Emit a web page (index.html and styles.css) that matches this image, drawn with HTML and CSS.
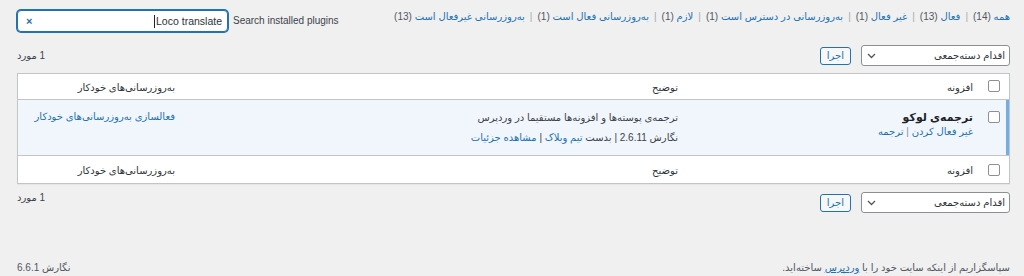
FILE: index.html
```html
<!DOCTYPE html>
<html lang="fa" dir="rtl">
<head>
<meta charset="utf-8">
<title>افزونه‌ها</title>
<link rel="stylesheet" href="styles.css">
</head>
<body>
<div class="page">
  <div class="top">
    <ul class="filters">
      <li><a href="#">همه <span class="num">(14)</span></a></li>
      <li><a href="#">فعال <span class="num">(13)</span></a></li>
      <li><a href="#">غیر فعال <span class="num">(1)</span></a></li>
      <li><a href="#">به&zwnj;روزرسانی در دسترس است <span class="num">(1)</span></a></li>
      <li><a href="#">لازم <span class="num">(1)</span></a></li>
      <li><a href="#">به&zwnj;روزرسانی فعال است <span class="num">(1)</span></a></li>
      <li><a href="#">به&zwnj;روزرسانی غیرفعال است <span class="num">(13)</span></a></li>
    </ul>
    <div class="search">
      <label class="search-label" dir="ltr">Search installed plugins</label>
      <div class="search-input">
        <span class="value" dir="ltr"><span class="caret"></span>Loco translate</span>
        <span class="clear">×</span>
      </div>
    </div>
  </div>

  <div class="tablenav">
    <div class="actions">
      <div class="select"><span>اقدام دسته&zwnj;جمعی</span><svg width="9" height="6" viewBox="0 0 9 6"><path d="M1 1l3.5 3.5L8 1" fill="none" stroke="#50575e" stroke-width="1.3"/></svg></div>
      <button class="apply">اجرا</button>
    </div>
    <div class="count">1 مورد</div>
  </div>

  <table class="plugins">
    <thead>
      <tr>
        <th class="check"><input type="checkbox"></th>
        <th class="name">افزونه</th>
        <th class="desc">توضیح</th>
        <th class="auto">به&zwnj;روزرسانی&zwnj;های خودکار</th>
      </tr>
    </thead>
    <tbody>
      <tr class="active">
        <td class="check"><input type="checkbox"></td>
        <td class="name">
          <strong class="title">ترجمه&zwnj;ی لوکو</strong>
          <div class="row-actions"><a href="#">غیر فعال کردن</a> <span class="sep">|</span> <a href="#">ترجمه</a></div>
        </td>
        <td class="desc">
          <p>ترجمه&zwnj;ی پوسته&zwnj;ها و افزونه&zwnj;ها مستقیما در وردپرس</p>
          <div class="meta">نگارش 2.6.11 <span class="bar">|</span> بدست <a href="#">تیم وبلاک</a> <span class="bar">|</span> <a href="#">مشاهده جزئیات</a></div>
        </td>
        <td class="auto"><a href="#">فعالسازی به&zwnj;روزرسانی&zwnj;های خودکار</a></td>
      </tr>
    </tbody>
    <tfoot>
      <tr>
        <th class="check"><input type="checkbox"></th>
        <th class="name">افزونه</th>
        <th class="desc">توضیح</th>
        <th class="auto">به&zwnj;روزرسانی&zwnj;های خودکار</th>
      </tr>
    </tfoot>
  </table>

  <div class="tablenav bottom">
    <div class="actions">
      <div class="select"><span>اقدام دسته&zwnj;جمعی</span><svg width="9" height="6" viewBox="0 0 9 6"><path d="M1 1l3.5 3.5L8 1" fill="none" stroke="#50575e" stroke-width="1.3"/></svg></div>
      <button class="apply">اجرا</button>
    </div>
    <div class="count">1 مورد</div>
  </div>

  <footer class="footer">
    <span class="thanks">سپاسگزاریم از اینکه سایت خود را با <a href="#">وردپرس</a> ساخته&zwnj;اید.</span>
    <span class="version">نگارش 6.6.1</span>
  </footer>
</div>
</body>
</html>
```

FILE: styles.css
```css
* { box-sizing: border-box; }
html, body { margin: 0; padding: 0; }
body {
  background: #f0f0f1;
  color: #3c434a;
  font-family: "Liberation Sans", "DejaVu Sans", sans-serif;
  font-size: 10px;
  line-height: 14px;
  direction: rtl;
}
a { color: #2271b1; text-decoration: none; }

.page {
  height: 276px;
  display: flex;
  flex-direction: column;
  padding: 0 14px 0 17px;
  overflow: hidden;
}

/* top */
.top {
  display: flex;
  justify-content: space-between;
  align-items: flex-start;
  padding-top: 10px;
  height: 32px;
}
.filters {
  display: flex;
  list-style: none;
  margin: 0;
  padding: 0;
  line-height: 14px;
  white-space: nowrap;
}
.filters li + li::before {
  content: "|";
  color: #a7aaad;
  margin: 0 5px;
}
.filters .num { color: #50575e; }

.search {
  display: flex;
  align-items: center;
  gap: 5px;
  height: 22px;
}
.search-label { color: #3c434a; font-size: 10px; }
.search-input {
  width: 211px;
  height: 22px;
  background: #fff;
  border: 1px solid #2271b1;
  box-shadow: 0 0 0 1px #2271b1;
  border-radius: 4px;
  display: flex;
  align-items: center;
  justify-content: space-between;
  padding: 0 5px 0 8px;
  font-size: 10.5px;
  color: #2c3338;
}
.caret {
  display: inline-block;
  width: 1px;
  height: 13px;
  background: #1d2327;
  vertical-align: middle;
  margin-right: 1px;
}
.clear { color: #2271b1; font-weight: bold; font-size: 11px; }

/* tablenav */
.tablenav {
  display: flex;
  justify-content: space-between;
  align-items: center;
  height: 21px;
  margin-top: 13px;
}
.tablenav.bottom { margin-top: 8px; align-items: flex-start; }
.tablenav.bottom .count { margin-top: -1px; }
.actions { display: flex; align-items: center; gap: 10px; }
.select {
  width: 149px;
  height: 21px;
  background: #fff;
  border: 1px solid #8c8f94;
  border-radius: 3px;
  display: flex;
  align-items: center;
  justify-content: space-between;
  padding: 0 4px 0 5px;
  color: #2c3338;
}
.apply {
  height: 18px;
  padding: 0 6px;
  border: 1px solid #2271b1;
  border-radius: 3px;
  background: #f6f7f7;
  color: #2271b1;
  font: inherit;
  line-height: 16px;
}
.count { color: #3c434a; }

/* table */
.plugins {
  margin-top: 7px;
  width: 100%;
  table-layout: fixed;
  border-collapse: separate;
  border-spacing: 0;
  background: #fff;
  border: 1px solid #c3c4c7;
  box-shadow: 0 1px 1px rgba(0,0,0,.04);
}
.plugins th, .plugins td {
  text-align: right;
  font-weight: normal;
  vertical-align: top;
  padding: 0 10px;
}
.plugins .check { width: 26px; padding: 0 9px 0 0; }
.plugins .name { width: 295px; }
.plugins .auto { width: 167px; }

.plugins thead th {
  padding-top: 7px;
  padding-bottom: 4px;
  height: 25px;
  border-bottom: 1px solid #c3c4c7;
  color: #2c3338;
}
.plugins thead th.check, .plugins tfoot th.check { padding-top: 6px; }
.plugins tfoot th {
  padding-top: 8px;
  padding-bottom: 5px;
  height: 28px;
  border-top: 1px solid #c3c4c7;
  color: #2c3338;
}
.plugins tfoot th.check { padding-top: 8px; }

input[type="checkbox"] {
  appearance: none;
  -webkit-appearance: none;
  width: 12px;
  height: 12px;
  margin: 0;
  border: 1px solid #8c8f94;
  border-radius: 2px;
  background: #fff;
  display: block;
}

.plugins tr.active td {
  background: #f0f6fc;
  height: 55px;
  padding-top: 10px;
}
.plugins tr.active td.check {
  border-right: 3px solid #72aee6;
  padding-right: 6px;
  padding-top: 11px;
}
.title {
  display: block;
  font-weight: bold;
  font-size: 11px;
  color: #1d2327;
}
.row-actions { margin-top: 1px; color: #a7aaad; }
.row-actions .sep { color: #8c8f94; }
.desc p { margin: 0; padding-top: 1px; color: #3c434a; }
.meta { margin-top: 6px; color: #3c434a; }
.meta .bar { color: #3c434a; }

/* footer */
.footer {
  margin-top: auto;
  display: flex;
  justify-content: space-between;
  padding-bottom: 1px;
  line-height: 14px;
  color: #50575e;
  font-size: 10px;
}
.footer a { text-decoration: underline; }
```
